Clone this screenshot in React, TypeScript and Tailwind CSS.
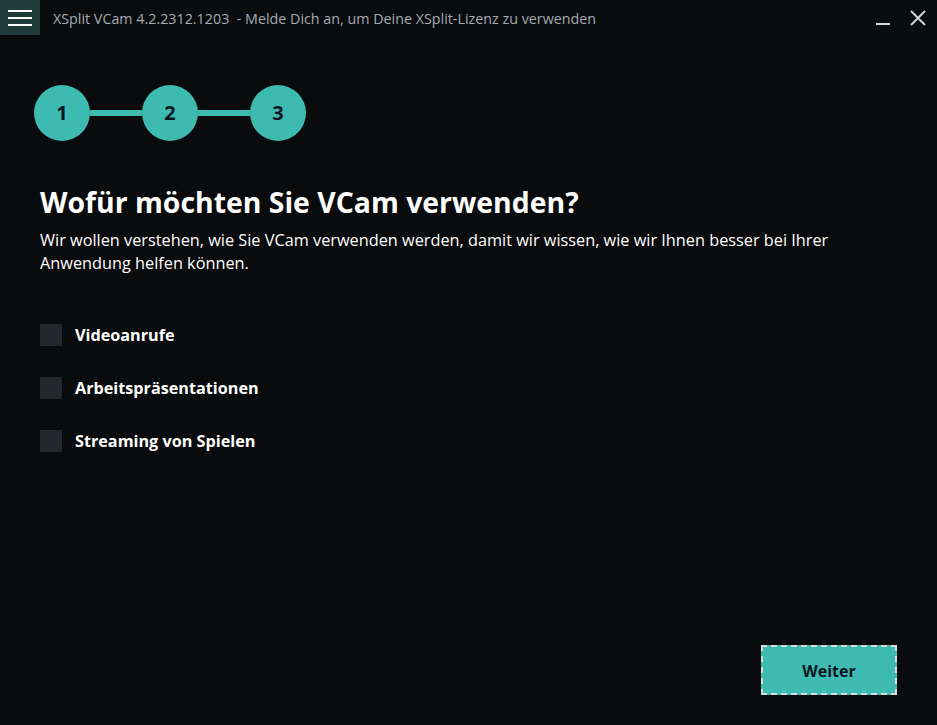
import React from "react";

const teal = "bg-[#3dbbb0]";

function Step({ n }: { n: number }) {
  return (
    <div className={`w-[56px] h-[56px] rounded-full ${teal} flex items-center justify-center text-[20px] font-bold text-[#0b1422] shrink-0`}>
      {n}
    </div>
  );
}

function Check({ label }: { label: string }) {
  return (
    <div className="flex items-center gap-[13px] h-[22px]">
      <div className="w-[22px] h-[22px] bg-[#25272c]" />
      <span className="text-[16.2px] font-bold text-white leading-none">{label}</span>
    </div>
  );
}

export default function App() {
  return (
    <div
      className="w-[937px] h-[725px] bg-[#0a0b0d] flex flex-col overflow-hidden"
      style={{ fontFamily: '"Open Sans", "Noto Sans", sans-serif' }}
    >
      <div className="h-[36px] flex items-center shrink-0">
        <div className="w-[40px] h-[35px] self-start bg-[#1e3b3a] flex flex-col items-center justify-center gap-[5px]">
          <div className="w-[24px] h-[2px] bg-white" />
          <div className="w-[24px] h-[2px] bg-white" />
          <div className="w-[24px] h-[2px] bg-white" />
        </div>
        <div className="ml-[13px] mt-[2px] text-[14.3px] text-[#a3aab3]">
          XSplit VCam 4.2.2312.1203&nbsp; - Melde Dich an, um Deine XSplit-Lizenz zu verwenden
        </div>
        <div className="ml-auto flex items-center gap-[18px] pr-[10px]">
          <svg width="16" height="16" viewBox="0 0 16 16">
            <rect x="1" y="13" width="14" height="2" fill="#d5d8dc" />
          </svg>
          <svg width="18" height="18" viewBox="0 0 18 18">
            <path d="M2 2 L16 16 M16 2 L2 16" stroke="#d5d8dc" strokeWidth="1.8" />
          </svg>
        </div>
      </div>

      <div className="flex-1 flex flex-col px-[40px] relative">
        <div className="flex items-center ml-[-6px] mt-[49px]">
          <Step n={1} />
          <div className={`w-[52px] h-[6px] ${teal}`} />
          <Step n={2} />
          <div className={`w-[52px] h-[6px] ${teal}`} />
          <Step n={3} />
        </div>

        <h1 className="mt-[42px] text-[28.4px] font-bold text-white leading-[38px]">
          Wofür möchten Sie VCam verwenden?
        </h1>
        <p className="mt-[8px] text-[16.3px] text-white leading-[23px] max-w-[840px]">
          Wir wollen verstehen, wie Sie VCam verwenden werden, damit wir wissen, wie wir Ihnen besser bei Ihrer Anwendung helfen können.
        </p>

        <div className="mt-[49px] flex flex-col gap-[31px]">
          <Check label="Videoanrufe" />
          <Check label="Arbeitspräsentationen" />
          <Check label="Streaming von Spielen" />
        </div>

        <div className="flex-1" />
        <div className="flex justify-end pb-[30px] pr-[0px]">
          <button className={`w-[136px] h-[50px] ${teal} border-2 border-dashed border-[#d9dcdc] text-[16px] font-bold text-[#0b1422] pt-[2px]`}>
            Weiter
          </button>
        </div>
      </div>
    </div>
  );
}
